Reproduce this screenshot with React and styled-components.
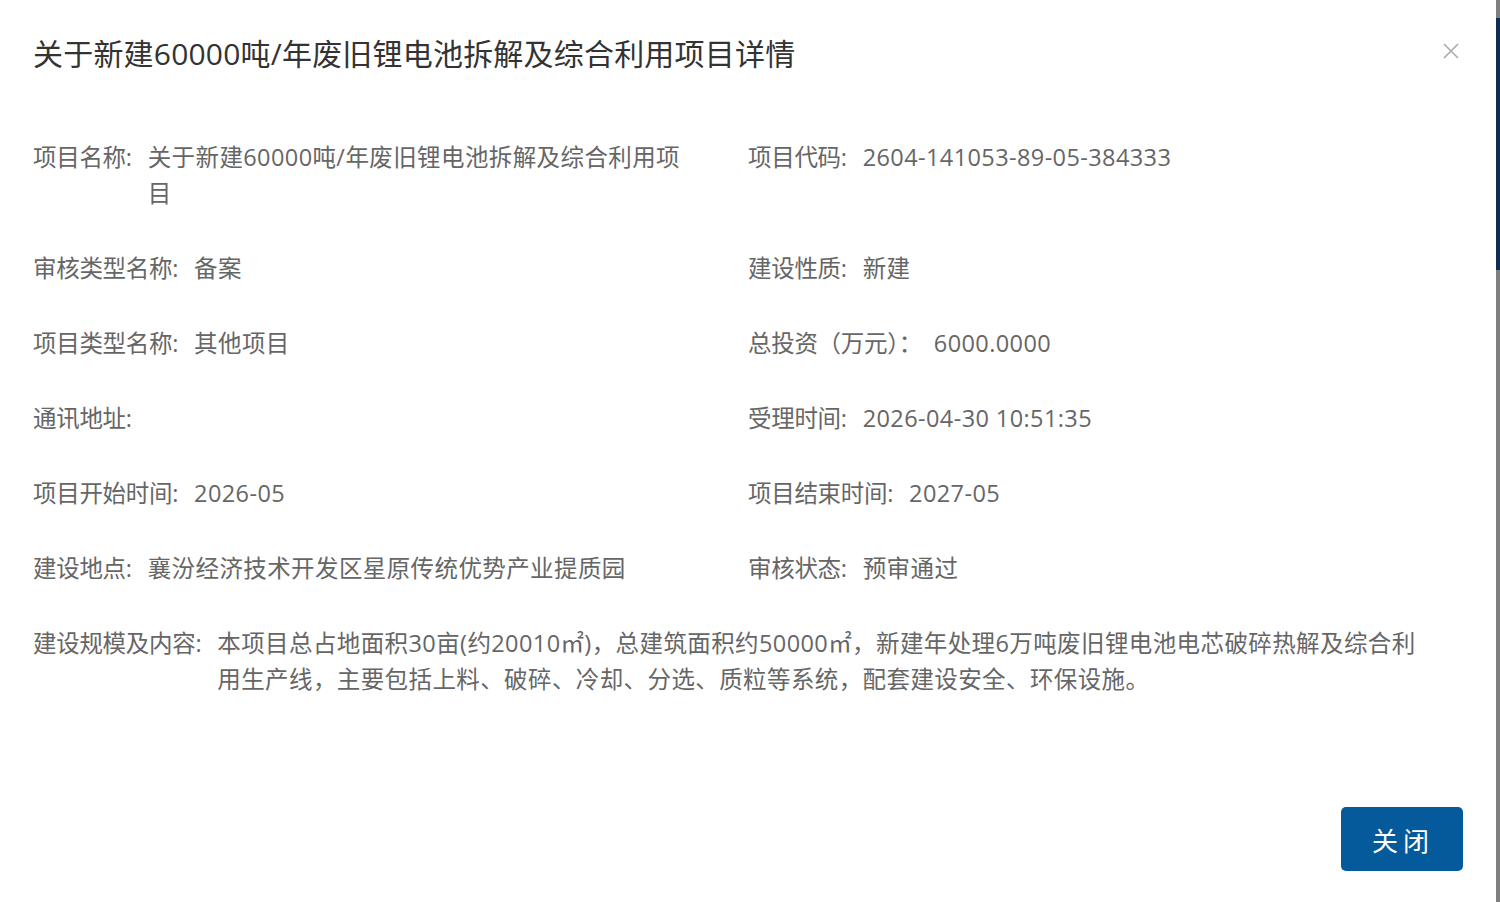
import React from "react";
import styled, { createGlobalStyle } from "styled-components";

const GlobalStyle = createGlobalStyle`
  html, body {
    margin: 0;
    padding: 0;
    background: #ffffff;
  }
  body {
    font-family: "Open Sans", "Noto Sans CJK SC", sans-serif;
  }
`;

const Screen = styled.div`
  display: flex;
  width: 1500px;
  height: 902px;
  overflow: hidden;
`;

const Modal = styled.div`
  flex: 1;
  display: flex;
  flex-direction: column;
  background: #ffffff;
  padding: 0 33px 31px 33px;
  box-sizing: border-box;
`;

const Backdrop = styled.div`
  width: 4px;
  background: #7f7f7f;
  display: flex;
  flex-direction: column;
  padding-top: 18px;
`;

const BackdropBar = styled.div`
  height: 252px;
  background: #0e2d55;
`;

const Header = styled.div`
  display: flex;
  align-items: center;
  justify-content: space-between;
  height: 104px;
`;

const Title = styled.h2`
  margin: 0;
  font-size: 30px;
  font-weight: 400;
  color: #333333;
  letter-spacing: 0.2px;
`;

const CloseBtn = styled.button`
  border: none;
  background: none;
  padding: 0;
  margin-right: 0;
  margin-top: -3px;
  width: 24px;
  height: 24px;
  display: flex;
  align-items: center;
  justify-content: center;
  cursor: pointer;
`;

const Grid = styled.div`
  display: grid;
  grid-template-columns: 715px 1fr;
  row-gap: 39px;
  margin-top: 35px;
`;

const Item = styled.div`
  display: flex;
  align-items: flex-start;
  grid-column: ${(p) => (p.$full ? "1 / -1" : "auto")};
  padding-right: ${(p) => (p.$full ? "30px" : "50px")};
  font-size: 23.5px;
  line-height: 36px;
  color: #666666;
  letter-spacing: 0.4px;
`;

const Label = styled.span`
  flex-shrink: 0;
  white-space: nowrap;
  letter-spacing: -0.3px;
`;

const Value = styled.span`
  margin-left: ${(p) => p.$gap || "16px"};
  flex: 1;
  min-width: 0;
`;

const Footer = styled.div`
  margin-top: auto;
  display: flex;
  justify-content: flex-end;
`;

const PrimaryButton = styled.button`
  width: 122px;
  height: 64px;
  border: none;
  border-radius: 5px;
  background: #045a9b;
  color: #ffffff;
  font-family: "Noto Sans CJK SC", sans-serif;
  font-size: 26px;
  letter-spacing: 5px;
  padding-left: 8px;
  cursor: pointer;
`;

const rows = [
  { label: "项目名称:", value: "关于新建60000吨/年废旧锂电池拆解及综合利用项目" },
  { label: "项目代码:", value: "2604-141053-89-05-384333" },
  { label: "审核类型名称:", value: "备案" },
  { label: "建设性质:", value: "新建" },
  { label: "项目类型名称:", value: "其他项目" },
  { label: "总投资（万元）：", value: "6000.0000", gap: "12px" },
  { label: "通讯地址:", value: "" },
  { label: "受理时间:", value: "2026-04-30 10:51:35" },
  { label: "项目开始时间:", value: "2026-05" },
  { label: "项目结束时间:", value: "2027-05" },
  { label: "建设地点:", value: "襄汾经济技术开发区星原传统优势产业提质园" },
  { label: "审核状态:", value: "预审通过" },
  {
    label: "建设规模及内容:",
    value:
      "本项目总占地面积30亩(约20010㎡)，总建筑面积约50000㎡，新建年处理6万吨废旧锂电池电芯破碎热解及综合利用生产线，主要包括上料、破碎、冷却、分选、质粒等系统，配套建设安全、环保设施。",
    full: true,
  },
];

export default function App() {
  return (
    <Screen>
      <GlobalStyle />
      <Modal>
        <Header>
          <Title>关于新建60000吨/年废旧锂电池拆解及综合利用项目详情</Title>
          <CloseBtn aria-label="关闭">
            <svg width="18" height="18" viewBox="0 0 18 18">
              <path d="M2 2 L16 16 M16 2 L2 16" stroke="#a8abb2" strokeWidth="1.6" fill="none" />
            </svg>
          </CloseBtn>
        </Header>
        <Grid>
          {rows.map((r) => (
            <Item key={r.label} $full={r.full}>
              <Label>{r.label}</Label>
              <Value $gap={r.gap}>{r.value}</Value>
            </Item>
          ))}
        </Grid>
        <Footer>
          <PrimaryButton>关闭</PrimaryButton>
        </Footer>
      </Modal>
      <Backdrop>
        <BackdropBar />
      </Backdrop>
    </Screen>
  );
}
